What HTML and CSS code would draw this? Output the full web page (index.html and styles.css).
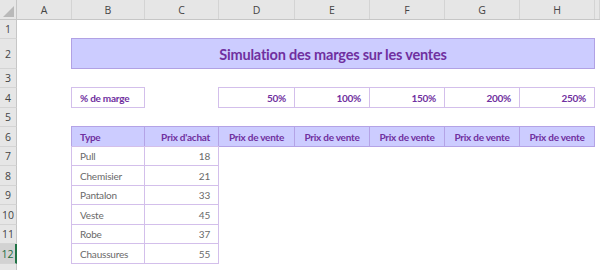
FILE: index.html
```html
<!DOCTYPE html>
<html>
<head>
    <title>Simulation des marges</title>
    <meta charset="UTF-8">
    <link rel="stylesheet" href="styles.css">
</head>
<body>
    <div class="sheet">
        <!-- column letters -->
        <div class="row head">
            <div class="corner"><span class="tri"></span></div>
            <div class="col">A</div>
            <div class="col">B</div>
            <div class="col">C</div>
            <div class="col">D</div>
            <div class="col">E</div>
            <div class="col">F</div>
            <div class="col">G</div>
            <div class="col">H</div>
            <div class="col"></div>
        </div>

        <div class="row h19"><div class="rh">1</div></div>

        <div class="row h30">
            <div class="rh">2</div>
            <div class="title bx">Simulation des marges sur les ventes</div>
        </div>

        <div class="row h19"><div class="rh">3</div></div>

        <div class="row h20">
            <div class="rh">4</div>
            <div class="cb bx strong">% de marge</div>
            <div class="cd bx strong num">50%</div>
            <div class="bx strong num">100%</div>
            <div class="bx strong num">150%</div>
            <div class="bx strong num">200%</div>
            <div class="bx strong num">250%</div>
        </div>

        <div class="row h19"><div class="rh">5</div></div>

        <div class="row h20">
            <div class="rh">6</div>
            <div class="cb bx th strong">Type</div>
            <div class="bx th strong num">Prix d'achat</div>
            <div class="bx th strong mid">Prix de vente</div>
            <div class="bx th strong mid">Prix de vente</div>
            <div class="bx th strong mid">Prix de vente</div>
            <div class="bx th strong mid">Prix de vente</div>
            <div class="bx th strong mid">Prix de vente</div>
        </div>

        <div class="row h19">
            <div class="rh">7</div>
            <div class="cb bx">Pull</div>
            <div class="bx num">18</div>
        </div>
        <div class="row h20">
            <div class="rh">8</div>
            <div class="cb bx">Chemisier</div>
            <div class="bx num">21</div>
        </div>
        <div class="row h19">
            <div class="rh">9</div>
            <div class="cb bx">Pantalon</div>
            <div class="bx num">33</div>
        </div>
        <div class="row h20">
            <div class="rh">10</div>
            <div class="cb bx">Veste</div>
            <div class="bx num">45</div>
        </div>
        <div class="row h19">
            <div class="rh">11</div>
            <div class="cb bx">Robe</div>
            <div class="bx num">37</div>
        </div>
        <div class="row h20">
            <div class="rh active">12</div>
            <div class="cb bx">Chaussures</div>
            <div class="bx num">55</div>
        </div>

        <!-- next row, only its top edge shows -->
        <div class="row h20"><div class="rh"></div></div>
    </div>
</body>
</html>
```

FILE: styles.css
```css
body {
    margin: 0;
    background: #fff;
    font-family: Lato, "Open Sans", sans-serif;
    font-size: 10px;
    letter-spacing: -0.2px;
    color: #6a6a6a;
    overflow: hidden;
}

.sheet {
    width: 600px;
    height: 270px;
    overflow: hidden;
}

/* every sheet row shares the same column widths */
.row {
    display: grid;
    grid-template-columns: 17px 55px 73px 74px 76px 75px 75px 75px 75px 1fr;
    align-items: stretch;
}
.h19 { height: 19px; }
.h20 { height: 20px; }
.h30 { height: 30px; }

/* headers */
.head {
    height: 20px;
    background: #e6e6e6;
    border-bottom: 1px solid #c6c6c6;
    box-sizing: border-box;
}
.corner {
    position: relative;
    border-right: 1px solid #c6c6c6;
}
.corner .tri {
    position: absolute;
    right: 2px;
    bottom: 2px;
    width: 0;
    height: 0;
    border-left: 11px solid transparent;
    border-bottom: 11px solid #b9b9b9;
}
.col {
    display: flex;
    align-items: center;
    justify-content: center;
    border-right: 1px solid #d4d4d4;
    color: #444;
    font-family: "Open Sans", sans-serif;
    font-size: 10.5px;
    letter-spacing: 0;
    padding-top: 1px;
}
.rh {
    display: flex;
    align-items: center;
    justify-content: center;
    background: #e6e6e6;
    border-right: 1px solid #c6c6c6;
    border-bottom: 1px solid #d4d4d4;
    color: #444;
    font-family: "Open Sans", sans-serif;
    font-size: 10.5px;
    letter-spacing: 0;
    box-sizing: border-box;
}
.rh.active {
    background: #d2d2d2;
    border-right: 2px solid #217346;
    color: #1f6b40;
}

/* cells */
.bx {
    display: flex;
    align-items: center;
    border: 1px solid #d3bfeb;
    margin: -1px 0 0 -1px;
    padding: 0 8px;
    white-space: nowrap;
    overflow: hidden;
}
.cb { grid-column-start: 3; }
.cd { grid-column-start: 5; }
.num { justify-content: flex-end; }
.mid { justify-content: center; padding: 0; }
.strong {
    font-size: 10px;
    font-weight: bold;
    letter-spacing: -0.25px;
    color: #7030a0;
}
.th {
    background: #ccccff;
    border-color: #b4a3e6;
}
.title {
    grid-column: 3 / 10;
    justify-content: center;
    background: #ccccff;
    border-color: #b1a1e4;
    color: #7030a0;
    font-weight: bold;
    font-size: 14.5px;
    letter-spacing: -0.2px;
    padding-top: 1px;
}
```
